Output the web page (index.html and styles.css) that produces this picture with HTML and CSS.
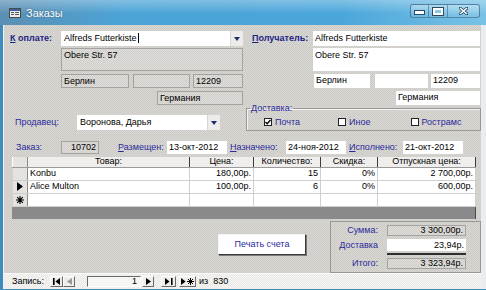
FILE: index.html
```html
<!DOCTYPE html>
<html lang="ru">
<head>
    <meta charset="UTF-8">
    <title>Заказы</title>
    <link rel="stylesheet" href="styles.css">
</head>
<body>

<div class="window">
    <div class="titlebar">
        <svg class="app-icon" width="12" height="10" viewBox="0 0 12 10">
            <rect x="0.5" y="0.5" width="11" height="9" fill="#ececec" stroke="#4a4a4a"/>
            <rect x="1" y="1" width="10" height="2" fill="#3e5f9e"/>
            <rect x="2" y="4" width="3" height="1" fill="#555"/>
            <rect x="6" y="4" width="4" height="1" fill="#555"/>
            <rect x="2" y="6" width="3" height="1" fill="#555"/>
            <rect x="6" y="6" width="4" height="1" fill="#555"/>
        </svg>
        <span class="title">Заказы</span>
        <div class="controls">
            <span class="ctl ctl-min"><i></i></span>
            <span class="ctl ctl-max"><i></i></span>
            <span class="ctl ctl-close">
                <svg width="9" height="8" viewBox="0 0 9 8">
                    <path d="M1 1 L8 7 M8 1 L1 7" stroke="#2b4a63" stroke-width="3" stroke-linecap="square"/>
                    <path d="M1 1 L8 7 M8 1 L1 7" stroke="#fff" stroke-width="1.6"/>
                </svg>
            </span>
        </div>
    </div>

    <div class="client">
        <div class="form">
            <div class="row row-a">
                <span class="lbl bold lbl-bill"><u>К</u> оплате:</span>
                <div class="combo combo-bill">
                    <span class="combo-text">Alfreds Futterkiste<i class="caret"></i></span>
                    <span class="drop"><svg width="6" height="4" viewBox="0 0 6 4"><path d="M0 0 H6 L3 4 Z" fill="#1d2c6e"/></svg></span>
                </div>
                <span class="lbl bold lbl-ship"><u>П</u>олучатель:</span>
                <div class="box white w-ship">Alfreds Futterkiste</div>
            </div>

            <div class="row row-b">
                <div class="box grey addr-left">Obere Str. 57</div>
                <div class="box white addr-right">Obere Str. 57</div>
            </div>

            <div class="row row-c">
                <div class="box grey city-l">Берлин</div>
                <div class="box grey region-l"></div>
                <div class="box grey zip-l">12209</div>
                <div class="box white city-r">Берлин</div>
                <div class="box white region-r"></div>
                <div class="box white zip-r">12209</div>
            </div>

            <div class="row row-d">
                <div class="box grey country-l">Германия</div>
                <div class="box white country-r">Германия</div>
            </div>

            <div class="row row-e">
                <div class="seller">
                    <span class="lbl lbl-seller">Продавец:</span>
                    <div class="combo combo-seller">
                        <span class="combo-text">Воронова, Дарья</span>
                        <span class="drop"><svg width="6" height="4" viewBox="0 0 6 4"><path d="M0 0 H6 L3 4 Z" fill="#1d2c6e"/></svg></span>
                    </div>
                </div>
                <fieldset class="shipping">
                    <legend class="lbl"><u>Д</u>оставка:</legend>
                    <div class="checks">
                        <label class="check check-1">
                            <span class="cb"><svg width="6" height="6" viewBox="0 0 6 6"><path d="M0.5 3 L2.2 4.8 L5.5 1" stroke="#000" stroke-width="1.4" fill="none"/></svg></span>
                            Почта
                        </label>
                        <label class="check check-2"><span class="cb"></span> Иное</label>
                        <label class="check check-3"><span class="cb"></span>Рострамс</label>
                    </div>
                </fieldset>
            </div>

            <div class="row row-dates">
                <span class="lbl lbl-order">Заказ:</span>
                <div class="box grey num order-id">10702</div>
                <span class="lbl lbl-placed"><u>Р</u>азмещен:</span>
                <div class="box white date">13-окт-2012</div>
                <span class="lbl lbl-due"><u>Н</u>азначено:</span>
                <div class="box white date">24-ноя-2012</div>
                <span class="lbl lbl-done"><u>И</u>сполнено:</span>
                <div class="box white date">21-окт-2012</div>
            </div>

            <div class="grid">
                <table>
                    <colgroup>
                        <col class="c-sel"><col class="c-name"><col class="c-price">
                        <col class="c-qty"><col class="c-disc"><col class="c-total">
                    </colgroup>
                    <thead>
                        <tr>
                            <th class="sel"></th>
                            <th>Товар:</th>
                            <th>Цена:</th>
                            <th>Количество:</th>
                            <th>Скидка:</th>
                            <th>Отпускная цена:</th>
                        </tr>
                    </thead>
                    <tbody>
                        <tr>
                            <td class="sel"></td>
                            <td>Konbu</td>
                            <td class="num">180,00р.</td>
                            <td class="num">15</td>
                            <td class="num">0%</td>
                            <td class="num">2 700,00р.</td>
                        </tr>
                        <tr>
                            <td class="sel"><svg width="6" height="9" viewBox="0 0 6 9"><path d="M0 0 L6 4.5 L0 9 Z" fill="#000"/></svg></td>
                            <td>Alice Multon</td>
                            <td class="num">100,00р.</td>
                            <td class="num">6</td>
                            <td class="num">0%</td>
                            <td class="num">600,00р.</td>
                        </tr>
                        <tr>
                            <td class="sel"><svg width="8" height="8" viewBox="0 0 8 8"><path d="M4 0 V8 M0 4 H8 M1.2 1.2 L6.8 6.8 M6.8 1.2 L1.2 6.8" stroke="#000" stroke-width="1.1"/></svg></td>
                            <td></td><td></td><td></td><td></td><td></td>
                        </tr>
                    </tbody>
                </table>
                <div class="grid-empty"></div>
            </div>

            <div class="row row-bottom">
                <button class="print">Печать счета</button>
                <div class="totals">
                    <div class="total-row">
                        <span class="lbl t-lbl">Сумма:</span>
                        <div class="box grey num t-val">3 300,00р.</div>
                    </div>
                    <div class="total-row t-ship">
                        <span class="lbl t-lbl">Доставка</span>
                        <div class="box white num t-val">23,94р.</div>
                    </div>
                    <div class="t-line"></div>
                    <div class="total-row t-sum">
                        <span class="lbl t-lbl">Итого:</span>
                        <div class="box grey num t-val">3 323,94р.</div>
                    </div>
                </div>
            </div>
        </div>

        <div class="navbar">
            <span class="nav-label">Запись:</span>
            <span class="nbtn nb-first"><svg width="7" height="7" viewBox="0 0 7 7"><path d="M0 0 H1.6 V7 H0 Z M7 0 V7 L2.4 3.5 Z" fill="#000"/></svg></span>
            <span class="nbtn nb-prev"><svg width="5" height="7" viewBox="0 0 5 7"><path d="M5 0 V7 L0 3.5 Z" fill="#9a9a9a"/></svg></span>
            <span class="nav-input">1</span>
            <span class="nbtn nb-next"><svg width="5" height="7" viewBox="0 0 5 7"><path d="M0 0 V7 L5 3.5 Z" fill="#000"/></svg></span>
            <span class="nbtn nb-last"><svg width="8" height="7" viewBox="0 0 8 7"><path d="M0 0 V7 L4.6 3.5 Z M6 0 H7.6 V7 H6 Z" fill="#000"/></svg></span>
            <span class="nbtn nb-new"><svg width="13" height="7" viewBox="0 0 13 7"><path d="M0 0 V7 L4.6 3.5 Z" fill="#000"/><path d="M9.5 0 V7 M6 3.5 H13 M7 1 L12 6 M12 1 L7 6" stroke="#000" stroke-width="1"/></svg></span>
            <span class="nav-count">из&nbsp;&nbsp;830</span>
        </div>
    </div>
</div>

</body>
</html>
```

FILE: styles.css
```css
* {
    box-sizing: border-box;
}
body {
    margin: 0;
    font-family: "Liberation Sans", Arial, sans-serif;
    font-size: 9px;
    color: #000;
    background: #fff;
}
.window {
    width: 486px;
    height: 290px;
    display: flex;
    flex-direction: column;
    background: #3d8cbb;
    overflow: hidden;
}

/* title bar */
.titlebar {
    height: 25px;
    flex: none;
    display: flex;
    align-items: flex-start;
    padding-left: 9px;
    background:
        linear-gradient(180deg, rgba(255, 255, 255, 0.3), rgba(255, 255, 255, 0) 55%),
        linear-gradient(90deg, #5b8fb3, #4ba3d6 25%, #4aa6da 70%, #79c2e6);
}
.app-icon {
    margin-top: 8px;
}
.title {
    margin-left: 5px;
    margin-top: 7px;
    font-size: 11px;
    color: #fff;
    text-shadow: 0 0 2px rgba(20, 50, 80, 0.6);
}
.controls {
    margin-left: auto;
    margin-right: 6px;
    margin-top: 4px;
    height: 14px;
    display: flex;
    border: 1px solid rgba(30, 70, 100, 0.55);
    border-radius: 3px;
    background: linear-gradient(180deg, rgba(255, 255, 255, 0.35), rgba(255, 255, 255, 0.05));
}
.ctl {
    display: flex;
    align-items: center;
    justify-content: center;
    height: 100%;
    border-right: 1px solid rgba(30, 70, 100, 0.45);
}
.ctl-min {
    width: 18px;
}
.ctl-min i {
    width: 9px;
    height: 3px;
    margin-top: 3px;
    background: #fff;
    outline: 1px solid #2b4a63;
}
.ctl-max {
    width: 19px;
}
.ctl-max i {
    width: 10px;
    height: 7px;
    border: 2px solid #fff;
    outline: 1px solid #2b4a63;
}
.ctl-close {
    width: 31px;
    border-right: none;
}

/* client area */
.client {
    flex: 1;
    margin: 0 0 3px 3px;
    border-left: 1px solid #f2f2f2;
    border-right: 5px solid #e9edf0;
    display: flex;
    flex-direction: column;
}
.form {
    flex: 1;
    background: repeating-conic-gradient(#cdcbc6 0 25%, #d9d7d3 0 50%) 0 0 / 2px 2px;
}
.row {
    display: flex;
    align-items: flex-start;
}
.lbl {
    color: #2a2a9c;
    line-height: 11px;
    white-space: nowrap;
}
.bold {
    font-weight: bold;
    color: #1c2486;
}
.box {
    line-height: 12px;
    padding: 0 2px;
    white-space: nowrap;
    overflow: hidden;
}
.white {
    background: #fff;
}
.grey {
    background: repeating-conic-gradient(#d2d0cc 0 25%, #dedcd8 0 50%) 0 0 / 2px 2px;
    border: 1px solid #a5a39f;
    line-height: 11px;
}
.num {
    text-align: right;
}

.combo {
    display: flex;
    background: #fff;
}
.combo-text {
    flex: 1;
    padding-left: 3px;
    line-height: 15px;
}
.caret {
    display: inline-block;
    width: 1px;
    height: 10px;
    margin-left: 1px;
    vertical-align: -2px;
    background: #000;
}
.drop {
    width: 13px;
    display: flex;
    align-items: center;
    justify-content: center;
    background: #edeceb;
    border-left: 1px solid #d6d6d6;
}

/* row: bill to / ship to */
.row-a {
    margin-top: 6px;
    height: 15px;
    padding-left: 6px;
}
.row-a .lbl {
    line-height: 15px;
}
.lbl-bill {
    width: 51px;
}
.combo-bill {
    width: 182px;
    height: 15px;
}
.lbl-ship {
    margin-left: 9px;
    width: 61px;
}
.w-ship {
    width: 167px;
    height: 15px;
    line-height: 15px;
}

.row-b {
    margin-top: 2px;
    height: 23px;
}
.row-b .box {
    height: 23px;
    padding-top: 1px;
}
.addr-left {
    margin-left: 57px;
    width: 182px;
}
.addr-right {
    margin-left: 70px;
    width: 167px;
}

.row-c {
    margin-top: 3px;
    height: 14px;
}
.row-c .box,
.row-d .box {
    height: 14px;
    line-height: 12px;
}
.city-l {
    margin-left: 57px;
    width: 68px;
}
.region-l {
    margin-left: 4px;
    width: 57px;
}
.zip-l {
    margin-left: 3px;
    width: 50px;
}
.city-r {
    margin-left: 71px;
    width: 56px;
}
.region-r {
    margin-left: 5px;
    width: 53px;
}
.zip-r {
    margin-left: 3px;
    width: 49px;
}

.row-d {
    margin-top: 3px;
    height: 14px;
}
.country-l {
    margin-left: 153px;
    width: 86px;
}
.country-r {
    margin-left: 153px;
    width: 84px;
}

/* seller + shipping */
.row-e {
    margin-top: -2px;
}
.seller {
    display: flex;
    margin-top: 12px;
    padding-left: 11px;
}
.lbl-seller {
    width: 62px;
    line-height: 15px;
}
.combo-seller {
    width: 143px;
    height: 15px;
}
.shipping {
    margin: 0 0 0 26px;
    padding: 0;
    width: 235px;
    height: 28px;
    border: 1px solid #9a9894;
    box-shadow: inset 1px 1px 0 #f4f4f4;
}
.shipping legend {
    margin-left: 3px;
    padding: 0 1px;
}
.checks {
    display: flex;
    margin-top: 2px;
}
.check {
    display: flex;
    align-items: center;
    gap: 3px;
    color: #2a2a9c;
    line-height: 12px;
}
.check-1 {
    margin-left: 17px;
}
.check-2 {
    margin-left: 38px;
}
.check-3 {
    margin-left: 41px;
    gap: 2px;
}
.cb {
    width: 8px;
    height: 8px;
    background: #fff;
    border: 1px solid #222;
    display: flex;
    align-items: center;
    justify-content: center;
}

/* dates */
.row-dates {
    margin-top: 10px;
    height: 13px;
}
.row-dates .lbl {
    line-height: 13px;
}
.row-dates .box {
    height: 13px;
}
.lbl-order {
    margin-left: 12px;
    width: 45px;
}
.order-id {
    width: 38px;
}
.lbl-placed {
    margin-left: 19px;
    width: 49px;
}
.date {
    width: 60px;
    line-height: 13px;
}
.lbl-due {
    margin-left: 3px;
    width: 56px;
}
.lbl-done {
    margin-left: 3px;
    width: 54px;
}

/* subform grid */
.grid {
    margin: 3px 0 0 8px;
    width: 464px;
    border-right: 1px solid #4a4a4a;
}
.grid table {
    width: 463px;
    table-layout: fixed;
    border-collapse: collapse;
    background: #fff;
}
.c-sel { width: 15px; }
.c-name { width: 162px; }
.c-price { width: 64px; }
.c-qty { width: 67px; }
.c-disc { width: 57px; }
.c-total { width: 98px; }
.grid th {
    height: 10px;
    padding: 0;
    font-weight: normal;
    line-height: 9px;
    background: #efeeec;
    border-right: 1px solid #3c3c3c;
    border-bottom: 1px solid #9a9a9a;
}
.grid td {
    height: 13px;
    padding: 0 2px;
    line-height: 11px;
    border: 1px solid #cfcfcf;
    white-space: nowrap;
}
.grid td.sel,
.grid th.sel {
    background: #e4e3e0;
    text-align: center;
    padding: 0;
    border-right: 1px solid #8a8a8a;
}
.grid td.sel svg {
    display: block;
    margin: 0 auto;
}
.grid-empty {
    height: 12px;
    background: #8a8a8a;
}

/* bottom: print button + totals */
.row-bottom {
    margin-top: 2px;
}
.print {
    margin: 13px 0 0 214px;
    width: 88px;
    height: 21px;
    padding: 0;
    font-family: inherit;
    font-size: 9px;
    color: #2a2a9c;
    background: #fff;
    border: 1px solid;
    border-color: #f4f4f4 #3a3a3a #3a3a3a #f4f4f4;
    box-shadow: 1px 1px 0 #7a7a7a;
}
.totals {
    margin-left: 24px;
    width: 151px;
    height: 52px;
    border: 1px solid #9a9894;
    padding-top: 3px;
}
.total-row {
    display: flex;
    height: 11px;
}
.t-lbl {
    width: 47px;
    text-align: right;
}
.t-val {
    margin-left: 9px;
    width: 79px;
    height: 11px;
    line-height: 9px;
}
.t-ship {
    margin-top: 3px;
    height: 12px;
}
.t-ship .t-lbl {
    line-height: 12px;
}
.t-ship .t-val {
    height: 12px;
    line-height: 12px;
}
.t-line {
    margin: 2px 0 0 56px;
    width: 79px;
    height: 2px;
    background: #2e2e2e;
}
.t-sum {
    margin-top: 3px;
}

/* record navigation */
.navbar {
    height: 16px;
    flex: none;
    display: flex;
    align-items: center;
    background: repeating-conic-gradient(#eae9e6 0 25%, #f5f5f3 0 50%) 0 0 / 2px 2px;
    border-top: 1px solid #fafafa;
}
.nav-label {
    margin-left: 8px;
    width: 38px;
}
.nbtn {
    height: 11px;
    display: flex;
    align-items: center;
    justify-content: center;
    background: #efeeeb;
    border: 1px solid;
    border-color: #fff #6a6a6a #6a6a6a #fff;
}
.nb-first {
    width: 13px;
}
.nb-prev {
    width: 12px;
}
.nav-input {
    margin-left: 12px;
    width: 54px;
    height: 11px;
    line-height: 9px;
    padding-right: 3px;
    text-align: right;
    background: #f6f6f4;
    border: 1px solid;
    border-color: #6a6a6a #fff #fff #6a6a6a;
}
.nb-next {
    margin-left: 1px;
    width: 12px;
}
.nb-last {
    margin-left: 7px;
    width: 15px;
}
.nb-new {
    margin-left: 3px;
    width: 17px;
}
.nav-count {
    margin-left: 3px;
}
```
